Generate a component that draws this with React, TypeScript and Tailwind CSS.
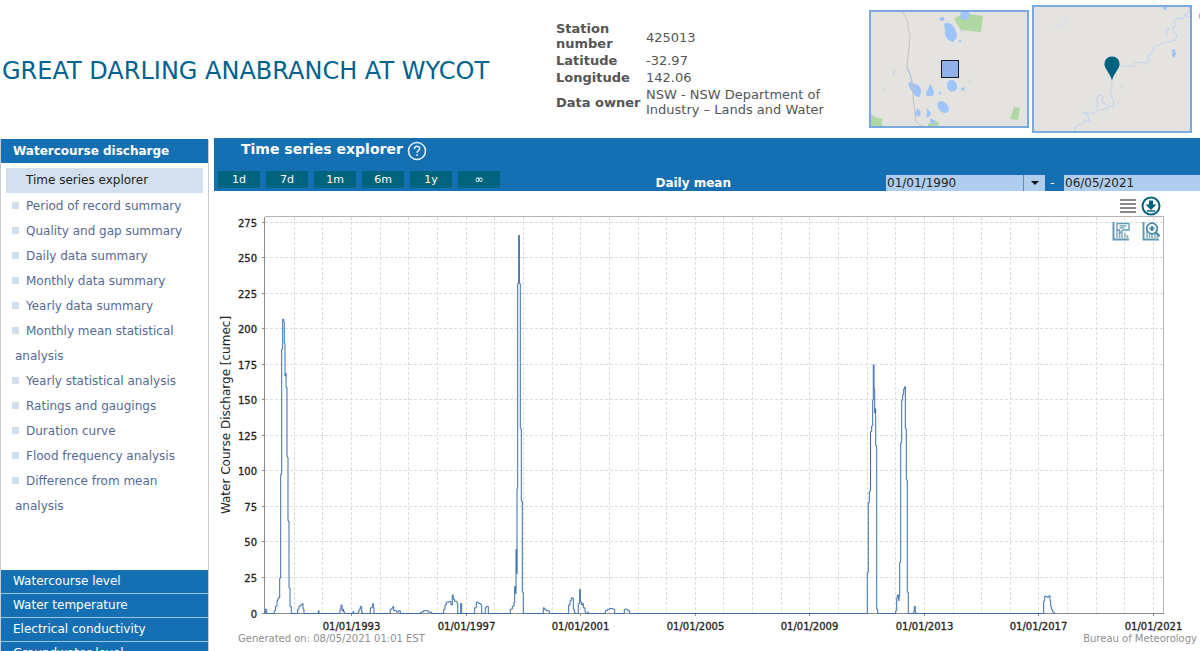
import { Fragment, useState } from 'react'

const menuItems = [
  'Time series explorer',
  'Period of record summary',
  'Quality and gap summary',
  'Daily data summary',
  'Monthly data summary',
  'Yearly data summary',
  'Monthly mean statistical analysis',
  'Yearly statistical analysis',
  'Ratings and gaugings',
  'Duration curve',
  'Flood frequency analysis',
  'Difference from mean analysis',
]

const otherParameters = ['Watercourse level', 'Water temperature', 'Electrical conductivity', 'Groundwater level']

const ranges = ['1d', '7d', '1m', '6m', '1y', '∞']

// Plot area inside the chart's own coordinate system
const LEFT = 50.5
const RIGHT = 949.5
const BASE = 397.5
const PX_PER_CUMEC = 1.4218
const PX_PER_YEAR = 28.64

const yTicks = [0, 25, 50, 75, 100, 125, 150, 175, 200, 225, 250, 275]
const gridYears = Array.from({ length: 31 }, (_, i) => 1991 + i)
const labelYears = [1993, 1997, 2001, 2005, 2009, 2013, 2017, 2021]

const yearX = (year: number) => Math.round(52.2 + (year - 1990) * PX_PER_YEAR) - 0.5
const valueY = (value: number) => Math.round((BASE - value * PX_PER_CUMEC) * 10) / 10

// [x, discharge] pairs, drawn as steps
const series: [number, number][] = [
  [51.3, 3], [52.7, 0], [60.3, 2], [61.5, 5], [63, 9], [64, 11], [65.7, 25], [66.7, 98], [67.7, 186], [68.7, 207],
  [69.7, 205], [70.3, 190], [71, 167], [71.7, 169], [72, 159], [73, 110], [74, 65], [75, 18], [76, 5], [77.3, 0],
  [83.7, 3], [85, 5], [86.3, 6], [88.3, 7], [89, 3], [90, 0], [104.3, 2], [105, 0],
  [126, 3], [127, 6], [128, 2], [129, 3], [129.7, 1], [131, 0], [139, 1.5], [139.7, 0],
  [144, 1], [145, 3], [146.3, 5], [147.7, 1], [148.3, 0], [156.3, 4], [158.7, 7], [159.3, 4], [160, 0],
  [176.3, 3], [178, 4], [179, 5], [179.7, 2], [182.7, 1], [184.7, 2], [186.3, 0],
  [206.7, 1], [209.3, 2], [212.7, 2], [214.3, 1], [217.7, 0],
  [229.7, 3], [231, 6], [232.3, 8], [235, 8.5], [237, 6], [238.3, 13], [239.3, 10], [240.7, 8.5], [243, 7], [243.7, 0],
  [246.7, 7], [247.7, 0], [260.7, 4], [262.3, 8], [264.3, 7], [266.7, 6], [267.7, 0], [271.3, 4], [272.3, 5], [274.3, 0],
  [296.3, 3], [298.3, 5], [300, 8], [300.7, 19], [301.5, 14], [302, 45], [302.7, 28], [303, 88], [303.7, 232],
  [304.7, 266], [305.4, 232], [306.3, 130], [307.3, 79], [308.3, 15], [309.3, 0],
  [329.3, 4], [330.3, 3], [332, 2], [335.3, 0], [354.7, 6], [356, 9], [357.3, 11], [359.3, 3], [360.3, 1], [361, 0],
  [364.3, 7], [365.7, 17], [366.3, 8], [367.7, 6], [368.7, 7], [369.3, 4], [371, 1], [371.7, 0], [373.3, 1], [374.3, 0],
  [391.3, 2], [393.3, 3], [396, 3.5], [398.7, 3], [400.7, 0], [410.3, 3], [413.3, 2], [415.7, 0],
  [653.3, 29], [654.3, 78], [655.3, 86], [656.5, 128], [657.7, 132], [658.7, 150], [659.3, 175], [660, 158], [660.7, 141],
  [661, 144], [661.7, 118], [662.7, 3], [663.7, 0],
  [681.7, 2], [682.7, 11], [683.3, 13], [684.7, 9], [685, 12], [685.7, 36], [686.7, 120], [687.7, 150], [688.7, 154],
  [689.7, 158], [690.7, 159.5], [691.3, 130], [692.3, 94], [693.3, 15], [694.3, 0],
  [699.3, 1], [700.3, 5], [701.3, 1], [702, 0],
  [829.7, 9], [830.7, 12], [832.7, 11.5], [835, 12.5], [836, 9], [836.7, 5], [837.3, 3], [838.7, 1], [840.3, 0],
]

const seriesPath = `M${LEFT} ${BASE}` + series.map(([x, v]) => `H${x}V${valueY(v)}`).join('')

function DischargeChart() {
  return (
    <svg viewBox="0 0 986 435" className="block w-full h-auto" role="img" aria-label="Water course discharge, daily mean">
      <g stroke="#dcdcdc" strokeDasharray="3 2" shapeRendering="crispEdges">
        {gridYears.map((year) => (
          <line key={year} x1={yearX(year)} x2={yearX(year)} y1="1" y2={BASE} />
        ))}
        {yTicks.slice(1).map((v) => (
          <line key={v} x1={LEFT} x2={RIGHT} y1={Math.round(valueY(v)) - 0.5} y2={Math.round(valueY(v)) - 0.5} />
        ))}
      </g>
      <g stroke="#8c8c8c" fill="none" shapeRendering="crispEdges">
        <path d={`M${LEFT} 0.5H${RIGHT}V${BASE}`} stroke="#b4b4b4" />
        <path d={`M${LEFT} 0.5V${BASE}H${RIGHT}`} />
        {yTicks.map((v) => (
          <line key={v} x1="48" x2="51" y1={Math.round(valueY(v)) - 0.5} y2={Math.round(valueY(v)) - 0.5} />
        ))}
        {labelYears.map((year) => (
          <line key={year} x1={yearX(year)} x2={yearX(year)} y1={BASE} y2="400" />
        ))}
      </g>
      <path d={seriesPath} fill="none" stroke="#3a6ea8" strokeWidth="1" />
      <g fill="#222" stroke="#222" strokeWidth="0.3" fontSize="10">
        {yTicks.map((v) => (
          <text key={v} x="43" y={Math.round(valueY(v)) + 4} textAnchor="end">{v}</text>
        ))}
        {labelYears.map((year) => (
          <text key={year} x={yearX(year)} y="414" textAnchor="middle">{`01/01/${year}`}</text>
        ))}
      </g>
      <text transform="translate(16 199) rotate(-90)" textAnchor="middle" fontSize="12" fill="#222">
        Water Course Discharge [cumec]
      </text>
      <g fill="#8f8f8f" fontSize="10">
        <text x="24" y="426">Generated on: 08/05/2021 01:01 EST</text>
        <text x="983" y="426" textAnchor="end">Bureau of Meteorology</text>
      </g>
    </svg>
  )
}

function RegionMap() {
  return (
    <svg viewBox="0 0 156 114" className="block w-full h-full" preserveAspectRatio="xMidYMid slice" role="img" aria-label="Region map">
      <rect width="156" height="114" fill="#e5e3df" />
      <path d="M83 7l9-6 20 3-2 16-20-2z" fill="#b0d8a2" />
      <path d="M143 95l6 1-2 12-8-1zM0 102l6 4h5v8H0zM57 112l7-4 4 3-1 3H57z" fill="#b0d8a2" />
      <g fill="#9dc5fb">
        <path d="M74 11c5-1 8 2 10 6 3 6 2 10-2 13-5-1-8-5-8-9 1-4-2-7 0-10z" />
        <path d="M90 0h8c1 4 0 8-4 8-5 0-5-4-4-8z" />
        <ellipse cx="71" cy="7" rx="2.5" ry="2" />
        <path d="M38 70c3 0 6 2 9 3 4 3 4 9 1 12-5 0-6-6-9-8-1-3-2-5-1-7z" />
        <path d="M59 72c3 3 3 6 4 9 0 4-6 4-8 2 0-4 3-6 4-11z" />
        <path d="M80 68c5 0 6 4 6 8-1 4-7 5-9 1s-1-8 3-9z" />
        <path d="M69 89c5 0 9 4 9 9-2 5-8 3-10-1-2-3-3-6 1-8z" />
        <path d="M46 97c4 0 4 4 3 7-3 1-5 0-5-3zM55 96c3 2 5 4 5 6-1 3-5 4-5 3 2-3 1-5 0-9zM59 107c3-1 5 2 5 5-3 1-6-2-5-5z" />
        <circle cx="89" cy="29" r="1.3" />
        <circle cx="92" cy="77" r="1.8" />
        <circle cx="69" cy="81" r="1.2" />
      </g>
      <path d="M24 58l-2 5M11 75l3 3M99 67v3M90 18l1 3" stroke="#b9cfee" fill="none" />
      <path d="M32 0c2 5 6 9 5 17l2 6-1 13-2 17c1 9 5 11 5 18 2 6 0 15 2 22l2 17 6 4" fill="none" stroke="#c3c2bf" />
      <path d="M36 56c3 4 4 9 5 14" fill="none" stroke="#a9c3e8" />
      <rect x="70.5" y="48.5" width="17" height="17" fill="#8fb0e8" stroke="#1a1a28" />
    </svg>
  )
}

function SiteMap() {
  return (
    <svg viewBox="0 0 156 124" className="block w-full h-full" preserveAspectRatio="xMidYMid slice" role="img" aria-label="Site map">
      <rect width="156" height="124" fill="#e5e3df" />
      <g fill="none" stroke="#c6d6ee" strokeWidth="1.2">
        <path d="M40 124l3-6 6-1 2-4 5 2-2-6-5-4 6 2 5-1 4-3 7-1 4-3 4 1 1-6-2-3-2-7 2-4-1-6" />
        <path d="M62 101l2-5-2-4 3-4 4 2-1 5 5 3" />
        <path d="M86 58l5 2 5-1 4 1 1-4 6-1 5 2 3-4-1-4 4-3 2-6 5-2 4-2 6-1 6-2 2-4-3-4-1-5 3-2-2-5 5-2 4 1 2-5 4-2 1-4-3-4 2-3" />
        <path d="M133 30l-1-6 4-3M150 8l6 2" />
        <path d="M21 20l9-3 3-4-1-4M83 92l1 8 2 1M75 102l-6 5" stroke="#d5dde6" />
        <path d="M87 79l3 3" stroke="#d5d5d5" />
      </g>
      <path d="M138 43l3-1 1 5-2 4-2-2zM129 0h4l-1 3-3-1z" fill="#9dc5fb" />
      <path d="M78 75c-2-9-8-13-8-18a8 8 0 0 1 16 0c0 5-6 9-8 18z" fill="#00627f" stroke="#f3f3f3" strokeWidth="0.7" />
    </svg>
  )
}

function ChartIcon({ children }: { children: React.ReactNode }) {
  return (
    <svg viewBox="0 0 20 20" className="block size-5" fill="none" stroke="#5f9bb3" aria-hidden="true">
      <path d="M2.5 1v17.5H18" strokeWidth="2" />
      <path d="M6 9v8M8.500 13v4M11 11v6M14 12v5M16.500 14v3" strokeWidth="1.600" stroke="#86b1c3" />
      {children}
    </svg>
  )
}

function StationHeader() {
  return (
    <header className="relative flex items-center gap-[3px] pt-[5px] pb-[5px] pr-2 overflow-hidden">
      <h1 className="flex-1 pl-[2px] pt-1 text-[24px] leading-8 text-[#00628f] whitespace-nowrap">
        GREAT DARLING ANABRANCH AT WYCOT
      </h1>
      <table className="w-[310px] table-fixed text-[13px] leading-[15px] text-[#555] text-left">
        <tbody>
          <tr>
            <th className="w-[90px] pr-3 pb-[2px] font-bold">Station number</th>
            <td>425013</td>
          </tr>
          <tr>
            <th className="pb-[2px] font-bold">Latitude</th>
            <td className="pb-[2px]">-32.97</td>
          </tr>
          <tr>
            <th className="pb-[2px] font-bold">Longitude</th>
            <td className="pb-[2px]">142.06</td>
          </tr>
          <tr>
            <th className="font-bold whitespace-nowrap">Data owner</th>
            <td className="pr-6">NSW - NSW Department of Industry – Lands and Water</td>
          </tr>
        </tbody>
      </table>
      <div className="w-40 h-[118px] border-2 border-[#7aa9dd] shrink-0">
        <RegionMap />
      </div>
      <div className="w-40 h-32 border-2 border-[#7aa9dd] shrink-0">
        <SiteMap />
      </div>
      <span className="absolute top-3 -right-[7px] size-2 rounded-full bg-[#f08080]" />
    </header>
  )
}

function Sidebar() {
  return (
    <aside className="w-[209px] mt-px shrink-0 border-x border-[#c8ccd0] text-[12px]">
      <h2 className="h-6 pl-3 leading-6 font-bold text-white bg-[#156fb3]">Watercourse discharge</h2>
      <ul className="h-[407px] pt-[5px] leading-[25px] text-[#566a91]">
        {menuItems.map((item, i) =>
          i === 0 ? (
            <li key={item} className="mx-[5px] mb-px pl-5 bg-[#d2dfed] text-[#222]">
              <a href="#explorer" aria-current="page">{item}</a>
            </li>
          ) : (
            <li key={item} className="pl-[14px] pr-6">
              <span className="inline-block size-[7px] -ml-[3px] mr-[7px] mb-px bg-[#d0deed]" />
              <a href="#report">{item}</a>
            </li>
          ),
        )}
      </ul>
      {otherParameters.map((name) => (
        <button key={name} className="block w-full h-6 pl-3 border-b border-[#9cc3e2] text-left leading-[23px] text-white bg-[#156fb3]">
          {name}
        </button>
      ))}
    </aside>
  )
}

function ExplorerBar() {
  const [from, setFrom] = useState('01/01/1990')
  const [to, setTo] = useState('06/05/2021')

  return (
    <div className="flex flex-col justify-between h-[53px] bg-[#156fb3] text-white">
      <div className="flex gap-1 pl-[27px]">
        <h2 className="text-[14px] leading-[22px] font-bold">Time series explorer</h2>
        <button aria-label="Help" className="pt-[3px]">
          <svg viewBox="0 0 20 20" className="block size-5" fill="none" stroke="#e4f1fb" strokeWidth="1.6">
            <circle cx="10" cy="10" r="8.500" />
            <path d="M7.400 8c0-3.600 5.300-3.500 5.300-.4 0 2-2.600 2-2.600 4.200M10.100 13.300v1.700" />
          </svg>
        </button>
      </div>
      <div className="flex items-end">
        <div className="flex gap-[6px] pl-1 pb-[3px]">
          {ranges.map((range) => (
            <button key={range} className="w-[42px] h-[17px] bg-[#00647f] text-[11px] leading-4">
              {range}
            </button>
          ))}
        </div>
        <span className="ml-auto mr-[155px] text-[12px] leading-4 font-bold whitespace-nowrap">Daily mean</span>
        <div className="flex items-center w-[314px] h-4 text-[12px]">
          <input
            aria-label="From"
            value={from}
            onChange={(e) => setFrom(e.target.value)}
            className="w-[137px] h-4 pl-px bg-[#afceed] text-[#222]"
          />
          <button aria-label="Pick start date" className="flex items-center justify-center w-[22px] h-4 border-l border-[#5c8fc0] bg-[#afceed]">
            <svg viewBox="0 0 8 4" className="w-2 h-1" fill="#111"><path d="M0 0h8L4 4z" /></svg>
          </button>
          <span className="flex-1 pr-1 text-center leading-4">-</span>
          <input
            aria-label="To"
            value={to}
            onChange={(e) => setTo(e.target.value)}
            className="w-[136px] h-4 pl-px bg-[#afceed] text-[#222]"
          />
        </div>
      </div>
    </div>
  )
}

function ChartTools() {
  return (
    <Fragment>
      <div className="flex justify-end items-center gap-[5px] h-[25px] pr-[39px] pt-[5px]">
        <button aria-label="Menu" className="flex flex-col gap-[2px] w-4">
          <span className="h-[2px] bg-[#8a8a8a]" />
          <span className="h-[2px] bg-[#8a8a8a]" />
          <span className="h-[2px] bg-[#8a8a8a]" />
          <span className="h-[2px] bg-[#8a8a8a]" />
        </button>
        <button aria-label="Download">
          <svg viewBox="0 0 20 20" className="block size-5" fill="none" stroke="#00627f">
            <circle cx="10" cy="10" r="8.500" strokeWidth="2" />
            <path d="M8 4.500h4V8.500h3.500L10 14 4.500 8.500H8z" fill="#00627f" stroke="none" />
            <path d="M6 15h8" strokeWidth="1.500" />
          </svg>
        </button>
      </div>
      <div className="absolute top-[30px] right-[39px] flex gap-[10px]">
        <button aria-label="Comments">
          <ChartIcon>
            <path d="M6 2.500h12v6.500H12L8.500 12.500V9H6z" fill="#fff" strokeWidth="1.300" />
            <path d="M8.500 4.800h7M8.500 6.800h5" strokeWidth="1.200" />
          </ChartIcon>
        </button>
        <button aria-label="Zoom in">
          <ChartIcon>
            <circle cx="11" cy="7.500" r="5.300" fill="#fff" stroke="#3f88a4" strokeWidth="1.700" />
            <path d="M8.500 7.500h5M11 5v5M14.700 11.200l4 4" stroke="#3f88a4" strokeWidth="2" />
          </ChartIcon>
        </button>
      </div>
    </Fragment>
  )
}

export default function App() {
  return (
    <div className="h-screen overflow-hidden bg-white font-['DejaVu_Sans',Verdana,sans-serif]">
      <StationHeader />
      <div className="flex gap-[5px]">
        <Sidebar />
        <main className="flex-1 min-w-0">
          <ExplorerBar />
          <section className="relative">
            <ChartTools />
            <DischargeChart />
          </section>
        </main>
      </div>
    </div>
  )
}
